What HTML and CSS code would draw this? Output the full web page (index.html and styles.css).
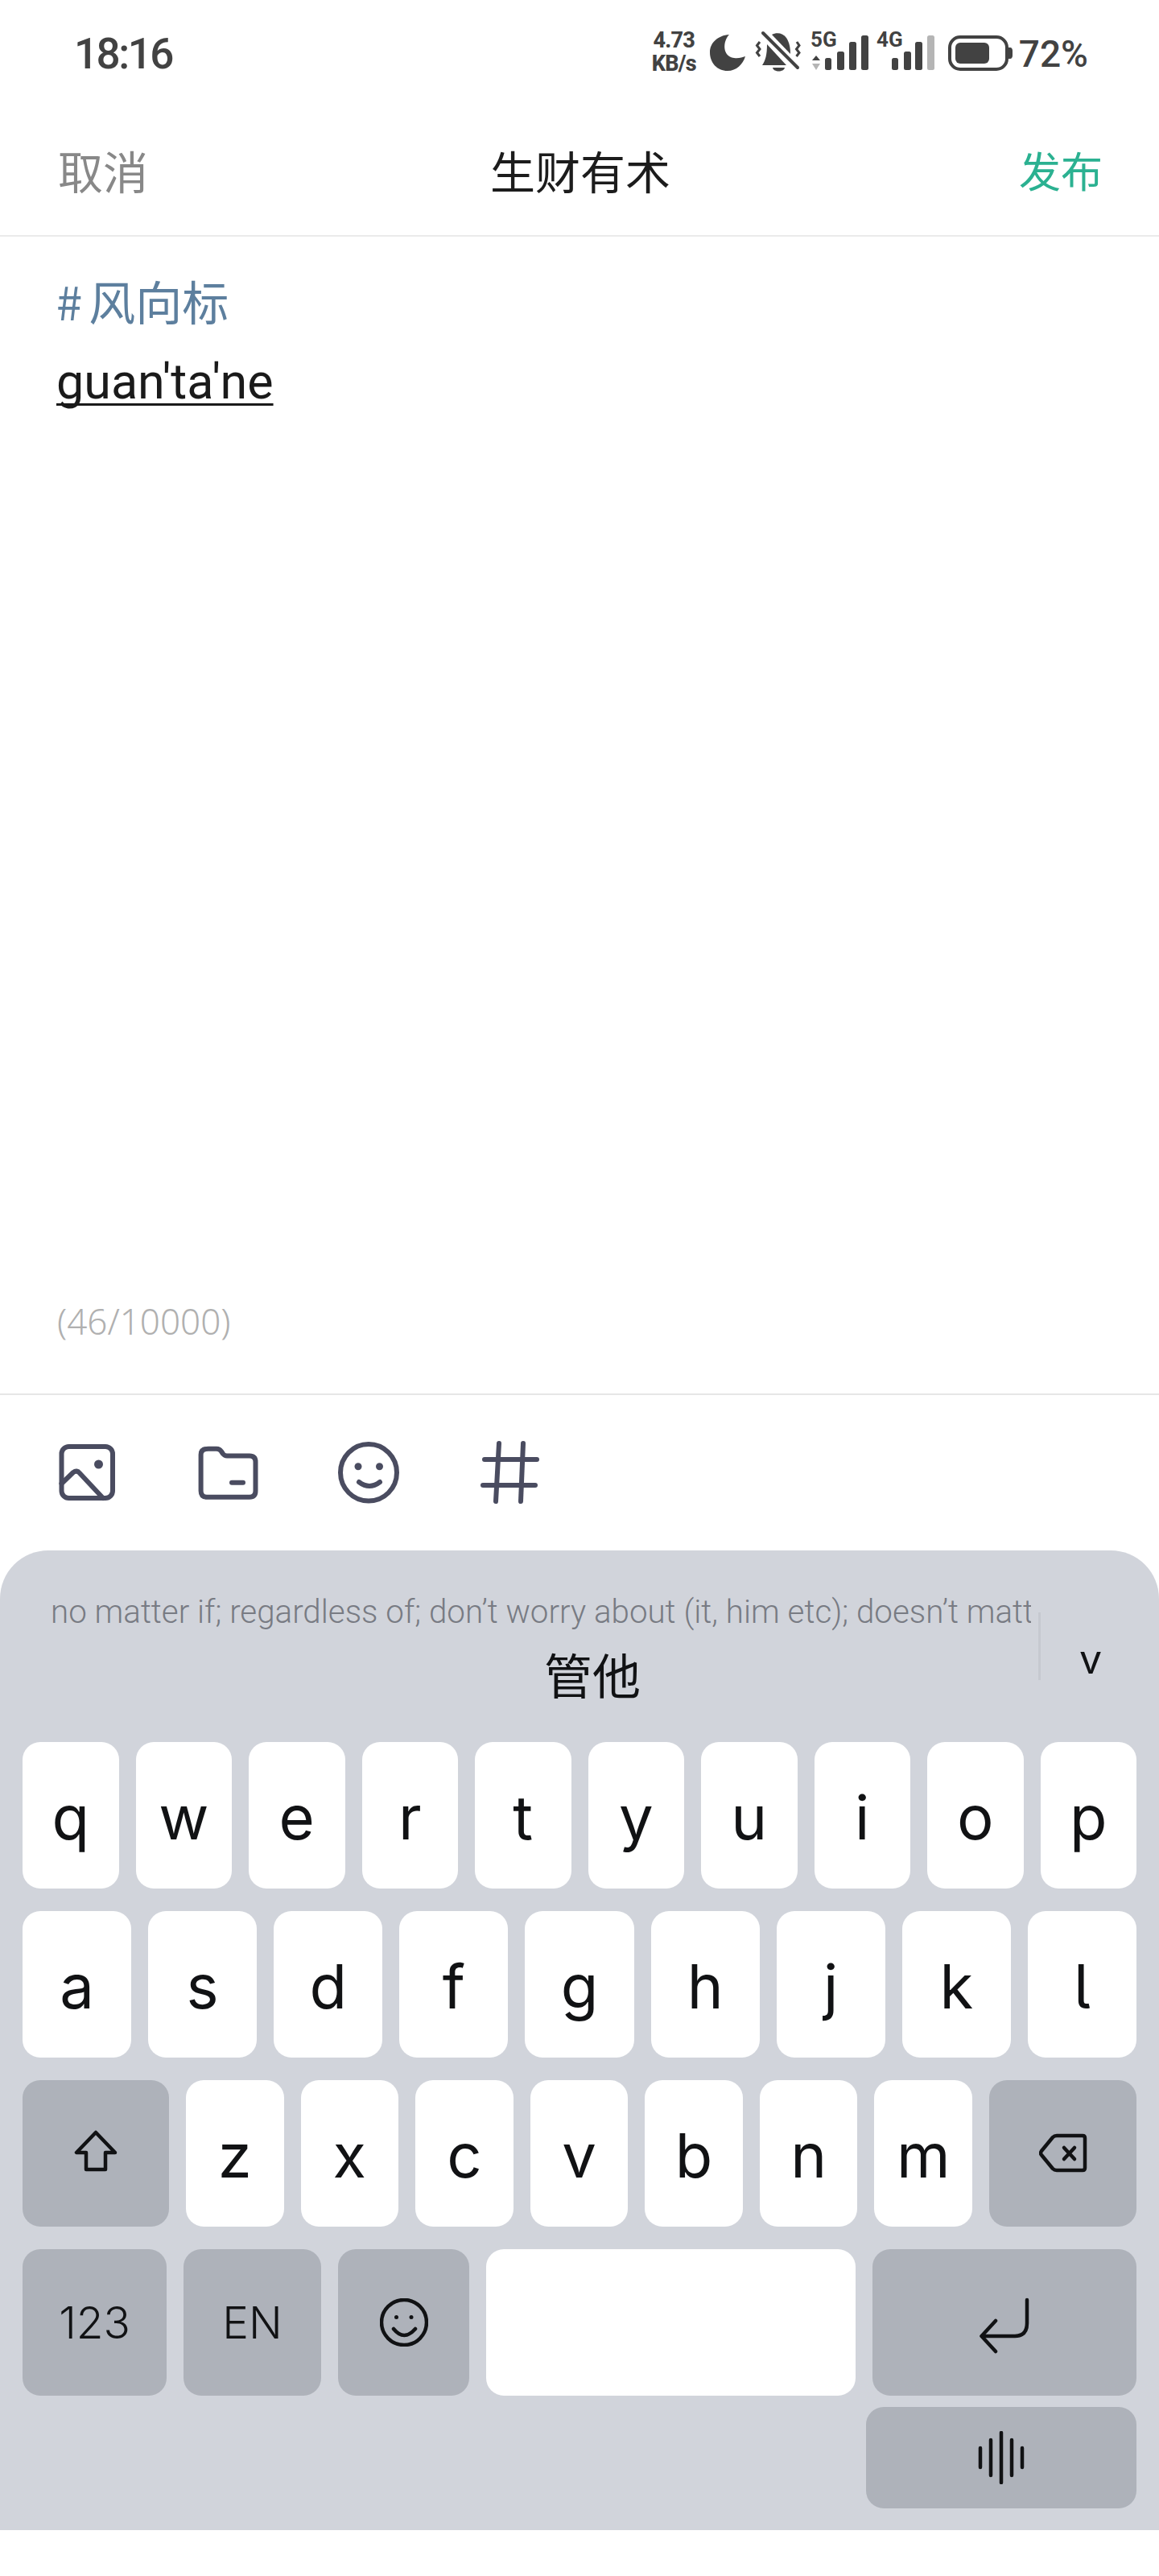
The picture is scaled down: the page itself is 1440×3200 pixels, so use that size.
FILE: index.html
```html
<!DOCTYPE html>
<html lang="zh-CN">
<head>
<meta charset="utf-8">
<title>生财有术</title>
<link rel="stylesheet" href="styles.css">
</head>
<body>
<div class="app">
  <div class="status">
    <span class="time">18:16</span>
    <div class="status-right">
      <div class="speed"><span>4.73</span><span>KB/s</span></div>
      <svg class="moon" width="44" height="45" viewBox="0 0 44 45"><path class="ink" d="M24 0C16 8 15 27 30 29C36 30 40 28 44 27C41 37 33 45 22 45C9 45 0 35 0 22C0 10 10 1 24 0Z"/></svg>
      <svg class="bell" width="54" height="50" viewBox="0 0 54 50">
        <path class="ink" d="M20 3C26 0 34 1 38 7C42 13 43 20 43 27Z"/>
        <path class="ink" d="M14 15L38 41H8C12 35 14 28 14 15Z"/>
        <path class="ink" d="M21 44H36C35 50 22 50 21 44Z"/>
        <path class="ink-line" d="M9 1L52 44"/>
        <path class="ink-thin" d="M5 12L1.500 16.500L5 21L1.500 25.500L5 30"/>
        <path class="ink-thin" d="M51 12L54 16.500L50.500 21L54 25.500L50.500 30"/>
      </svg>
      <svg class="sig" width="72" height="50" viewBox="0 0 72 50">
        <text class="net" x="0" y="19">5G</text>
        <path class="ink" d="M7 30L12 36H2Z"/>
        <path class="grey" d="M2 40H12L7 48Z"/>
        <rect class="ink" x="18" y="33" width="8" height="15" rx="2.500"/>
        <rect class="ink" x="33" y="25" width="9" height="23" rx="2.500"/>
        <rect class="ink" x="48" y="13" width="9" height="35" rx="2.500"/>
        <rect class="ink" x="63" y="5" width="9" height="43" rx="2.500"/>
      </svg>
      <svg class="sig sig-four" width="72" height="50" viewBox="0 0 72 50">
        <text class="net" x="0" y="19">4G</text>
        <rect class="ink" x="19" y="33" width="8" height="15" rx="2.500"/>
        <rect class="ink" x="34" y="25" width="9" height="23" rx="2.500"/>
        <rect class="ink" x="48" y="13" width="9" height="35" rx="2.500"/>
        <rect class="grey" x="63" y="5" width="9" height="43" rx="2.500"/>
      </svg>
      <svg class="battery" width="80" height="44" viewBox="0 0 80 44">
        <rect class="ink-outline" x="2" y="2" width="71" height="40" rx="13"/>
        <rect class="ink" x="9" y="9" width="42" height="26" rx="6"/>
        <path class="ink" d="M75 15H77C79 15 80 17 80 19V25C80 27 79 29 77 29H75Z"/>
      </svg>
      <span class="pct">72%</span>
    </div>
  </div>

  <header class="nav">
    <span class="nav-cancel">取消</span>
    <span class="nav-title">生财有术</span>
    <span class="nav-publish">发布</span>
  </header>

  <main class="editor">
    <div class="tag"><span class="tag-hash">#</span>风向标</div>
    <div class="draft"><span class="composing">guan'ta'ne</span></div>
    <div class="counter">(46/10000)</div>
  </main>

  <div class="tools">
    <svg class="tool" width="80" height="80" viewBox="0 0 80 80">
      <rect x="8.500" y="8" width="63.500" height="64" rx="9"/>
      <path d="M8.500 54L23 40Q27.500 36.500 31 41L60 72"/>
      <circle class="tool-fill" cx="54.500" cy="30" r="5.500"/>
    </svg>
    <svg class="tool" width="80" height="80" viewBox="0 0 80 80">
      <path d="M15 10.700H25Q29 10.700 31 14L33 17Q35 19.500 38 19.500H66Q73.500 19.500 73.500 27V63Q73.500 70.700 66 70.700H13Q5.600 70.700 5.600 63V18Q5.600 10.700 15 10.700Z"/>
      <path d="M44 52.700H58"/>
    </svg>
    <svg class="tool" width="80" height="80" viewBox="0 0 80 80">
      <ellipse cx="38" cy="40.300" rx="35" ry="35.300"/>
      <circle class="tool-fill" cx="25" cy="32.700" r="4.500"/>
      <circle class="tool-fill" cx="51.500" cy="32.700" r="4.500"/>
      <path d="M26 52Q39 62 52 52"/>
    </svg>
    <svg class="tool" width="80" height="80" viewBox="0 0 80 80">
      <path d="M24 4L20 76"/>
      <path d="M54 4L51 76"/>
      <path d="M6 24H71"/>
      <path d="M4 56H69"/>
    </svg>
  </div>

  <section class="keyboard">
    <div class="candidates">
      <div class="cand-main">
        <div class="hint">no matter if; regardless of; don’t worry about (it, him etc); doesn’t matter</div>
        <div class="cand-word">管他</div>
      </div>
      <div class="cand-divider"></div>
      <div class="cand-more">v</div>
    </div>
    <div class="keys">
      <div class="row">
        <div class="key">q</div><div class="key">w</div><div class="key">e</div><div class="key">r</div><div class="key">t</div><div class="key">y</div><div class="key">u</div><div class="key">i</div><div class="key">o</div><div class="key">p</div>
      </div>
      <div class="row">
        <div class="key">a</div><div class="key">s</div><div class="key">d</div><div class="key">f</div><div class="key">g</div><div class="key">h</div><div class="key">j</div><div class="key">k</div><div class="key">l</div>
      </div>
      <div class="row">
        <div class="key fn shift">
          <svg class="kicon shift-icon" width="54" height="52" viewBox="0 0 54 52"><path d="M27 3L3 28H15V49H39V28H51Z"/></svg>
        </div>
        <div class="key">z</div><div class="key">x</div><div class="key">c</div><div class="key">v</div><div class="key">b</div><div class="key">n</div><div class="key">m</div>
        <div class="key fn del">
          <svg class="kicon" width="60" height="50" viewBox="0 0 60 50"><path d="M22 3H54Q57 3 57 6V43Q57 46 54 46H22Q19 46 17 44L3 27Q1 25 3 22L17 5Q19 3 22 3Z"/><path d="M31 18L44 32M44 18L31 32"/></svg>
        </div>
      </div>
      <div class="row">
        <div class="key fn label num">123</div>
        <div class="key fn label lang">EN</div>
        <div class="key fn emoji">
          <svg class="kicon" width="60" height="60" viewBox="0 0 60 60"><ellipse cx="30" cy="30" rx="28" ry="28"/><circle class="kfill" cx="20.500" cy="23.500" r="2.500"/><circle class="kfill" cx="39" cy="23.500" r="2.500"/><path d="M17 38Q30 54 44 38"/></svg>
        </div>
        <div class="key space"></div>
        <div class="key fn enter">
          <svg class="kicon enter-icon" width="64" height="70" viewBox="0 0 64 70"><path d="M60 3V32Q60 48 45 48H4"/><path d="M21 29L3.500 48L21 67"/></svg>
        </div>
      </div>
      <div class="row row-voice">
        <div class="key fn voice">
          <svg class="kicon" width="58" height="66" viewBox="0 0 58 66"><path d="M3 21V45M16 11V55M29 2V64M42 11V55M55 21V45"/></svg>
        </div>
      </div>
    </div>
  </section>
</div>
</body>
</html>
```
FILE: styles.css
```css
* { box-sizing: border-box; }
html, body { margin: 0; padding: 0; background: #fff; }
body { font-family: "Noto Sans", "Noto Sans CJK SC", sans-serif; }
.app { width: 1440px; height: 3200px; display: flex; flex-direction: column; overflow: hidden; padding-bottom: 57px; }

.status { height: 130px; padding: 34px 88px 0 92px; display: flex; justify-content: space-between; align-items: flex-start; color: #424242; flex: none; }
.time { font: 500 53px/66px Roboto, sans-serif; letter-spacing: -2.500px; }
.status-right { display: flex; align-items: flex-start; gap: 14px; padding-top: 5px; }
.speed { width: 57px; margin-top: -3px; margin-right: 2px; display: flex; flex-direction: column; align-items: center; font: 800 27px/28.500px Roboto, sans-serif; letter-spacing: -0.800px; white-space: nowrap; }
.moon { margin-top: 4px; }
.bell { margin-top: 1px; margin-left: -1px; overflow: visible; }
.sig { margin-top: 0; overflow: visible; }
.sig-four { margin-left: -4px; }
.battery { margin-top: 5px; margin-left: 3px; }
.pct { font: 500 46px/52px Roboto, sans-serif; margin-left: -6px; margin-top: 2px; }
.ink { fill: #424242; }
.grey { fill: #b5b5b5; }
.ink-line { fill: none; stroke: #424242; stroke-width: 4; stroke-linecap: round; }
.ink-thin { fill: none; stroke: #424242; stroke-width: 3; }
.ink-outline { fill: none; stroke: #424242; stroke-width: 4; }
.net { font: 700 26px Roboto, sans-serif; fill: #424242; }

.nav { height: 164px; flex: none; padding: 0 70px 0 72px; border-bottom: 2px solid #ebebeb; display: grid; grid-template-columns: 1fr auto 1fr; align-items: center; font-family: "Noto Sans CJK SC", sans-serif; font-size: 56px; line-height: 70px; }
.nav-cancel { color: #888; }
.nav-title { color: #1c1c1c; }
.nav-publish { color: #2bb191; justify-self: end; font-size: 52px; }

.editor { flex: 1; display: flex; flex-direction: column; padding: 42px 71px 61px 72px; border-bottom: 2px solid #e6e6e6; }
.tag { font-family: "Noto Sans CJK SC", sans-serif; font-size: 58px; line-height: 74px; color: #5d7f9e; margin-left: -2px; }
.tag-hash { margin-right: 8px; }
.draft { font-family: Roboto, "Noto Sans", sans-serif; font-size: 61px; line-height: 78px; color: #1a1a1a; margin-left: -2px; margin-top: 25px; }
.composing { text-decoration: underline; text-decoration-thickness: 3px; text-underline-offset: 6px; text-decoration-skip-ink: none; }
.counter { margin-top: auto; font-size: 44px; line-height: 58px; font-weight: 300; color: #b0b0b0; margin-left: -1px; }

.tools { height: 193px; flex: none; display: flex; align-items: flex-start; gap: 96px; padding: 56px 0 0 68px; }
.tool { fill: none; stroke: #4a4c60; stroke-width: 6; stroke-linecap: round; stroke-linejoin: round; overflow: visible; }
.tool-fill { fill: #4a4c60; stroke: none; }

.keyboard { height: 1217px; flex: none; background: #d1d4db; border-radius: 60px 60px 0 0; padding: 0 28px; }
.candidates { height: 238px; margin: 0 -28px; display: flex; align-items: flex-start; }
.cand-main { width: 1281px; padding-left: 63px; }
.hint { margin-top: 50px; font-family: Roboto, sans-serif; font-size: 40.300px; line-height: 54px; font-weight: 300; color: #787b83; white-space: nowrap; overflow: hidden; }
.cand-word { margin-top: 11px; padding-left: 613px; font-family: "Noto Sans CJK SC", sans-serif; font-size: 60px; line-height: 76px; color: #111214; }
.cand-divider { width: 3px; height: 84px; margin: 77px 0 0 9px; background: #c6c9d0; }
.cand-more { margin: 110px 0 0 48px; font: 400 50px/50px Inter, sans-serif; color: #111214; }

.keys { display: flex; flex-direction: column; gap: 28px; }
.row { display: flex; gap: 21px; height: 182px; }
.key { flex: 1 1 0; min-width: 0; display: flex; align-items: center; justify-content: center; background: #fff; border-radius: 22px; font: 400 76px/92px Inter, sans-serif; font-feature-settings: "cv05"; color: #111214; padding-top: 3px; }
.key.fn { background: #aeb2ba; padding-top: 0; }
.key.shift { flex: 0 0 182px; }
.key.del { flex: 0 0 183px; }
.key.label { font-size: 55px; font-weight: 300; }
.key.num { flex: 0 0 179px; }
.key.lang { flex: 0 0 171px; }
.key.emoji { flex: 0 0 163px; }
.key.space { flex: 0 0 459px; }
.key.enter { flex: 0 0 328px; }
.row-voice { height: 126px; justify-content: flex-end; margin-top: -14px; }
.key.voice { flex: 0 0 336px; }
.kicon { fill: none; stroke: #111214; stroke-width: 4.500; stroke-linecap: round; stroke-linejoin: round; }
.kfill { fill: #111214; stroke: none; }
.shift-icon { margin-bottom: 7px; }
.enter-icon { margin-top: 8px; }
```
